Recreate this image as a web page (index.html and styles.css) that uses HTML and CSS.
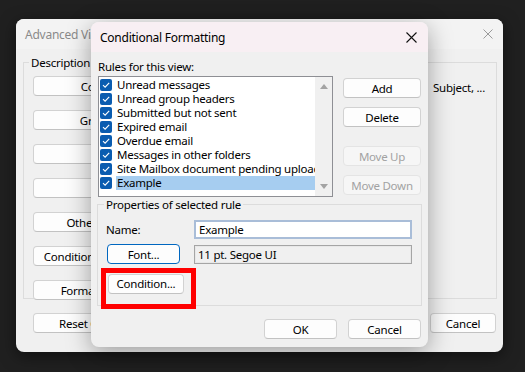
FILE: index.html
```html
<!DOCTYPE html>
<html lang="en">
<head>
  <meta charset="UTF-8" />
  <title>Conditional Formatting</title>
  <link rel="stylesheet" href="styles.css">
</head>
<body>

  <!-- Advanced View Settings (behind) -->
  <div class="window back-window">
    <div class="titlebar">
      <span class="title">Advanced View Settings: Compact</span>
      <svg class="close" width="10" height="10" viewBox="0 0 10 10"><path d="M0.5 0.5L9.5 9.5M9.5 0.5L0.5 9.5" stroke="currentColor" stroke-width="1"/></svg>
    </div>
    <div class="body">
      <fieldset class="group desc-group">
        <legend>Description</legend>
        <div class="desc-row">
          <button class="btn wide">Columns...</button>
          <div class="desc-text long"><span>Importance, Reminder, Icon, Flag Status, Attachment, From,  Subject, ...</span></div>
        </div>
        <div class="desc-row"><button class="btn wide">Group By...</button><div class="desc-text"><span>Off</span></div></div>
        <div class="desc-row"><button class="btn wide">Sort...</button><div class="desc-text"><span>Received (descending)</span></div></div>
        <div class="desc-row"><button class="btn wide">Filter...</button><div class="desc-text"><span>Off</span></div></div>
        <div class="desc-row"><button class="btn wide">Other Settings...</button><div class="desc-text"><span>Fonts and other settings</span></div></div>
        <div class="desc-row"><button class="btn wide">Conditional Formatting...</button><div class="desc-text"><span>User defined fonts</span></div></div>
        <div class="desc-row"><button class="btn wide">Format Columns...</button><div class="desc-text"><span>Display formats</span></div></div>
      </fieldset>
      <div class="back-footer">
        <button class="btn wide">Reset Current View</button>
        <div class="footer-right">
          <button class="btn small">OK</button>
          <button class="btn small">Cancel</button>
        </div>
      </div>
    </div>
  </div>

  <!-- Conditional Formatting (front) -->
  <div class="window front-window">
    <div class="titlebar">
      <span class="title">Conditional Formatting</span>
      <svg class="close" width="11" height="11" viewBox="0 0 11 11"><path d="M0.5 0.5L10.5 10.5M10.5 0.5L0.5 10.5" stroke="currentColor" stroke-width="1.1"/></svg>
    </div>
    <div class="body">
      <div class="caption">Rules for this view:</div>
      <div class="rules-row">
        <div class="listbox">
          <ul class="rules" id="rules"></ul>
          <div class="scrollbar">
            <span class="arrow up"></span>
            <span class="arrow down"></span>
          </div>
        </div>
        <div class="side-buttons">
          <button class="btn">Add</button>
          <button class="btn">Delete</button>
          <button class="btn disabled move-up">Move Up</button>
          <button class="btn disabled">Move Down</button>
        </div>
      </div>

      <fieldset class="group props">
        <legend>Properties of selected rule</legend>
        <div class="props-grid">
          <label>Name:</label>
          <div class="field name-field">Example</div>
          <button class="btn default">Font...</button>
          <div class="field font-field">11 pt. Segoe UI</div>
          <button class="btn condition-btn">Condition...</button>
        </div>
      </fieldset>

      <div class="footer">
        <button class="btn">OK</button>
        <button class="btn">Cancel</button>
      </div>
    </div>

    <!-- highlight drawn over the screenshot -->
    <div class="callout"></div>
  </div>

  <script>
    const rules = [
      'Unread messages',
      'Unread group headers',
      'Submitted but not sent',
      'Expired email',
      'Overdue email',
      'Messages in other folders',
      'Site Mailbox document pending upload',
      'Example'
    ];
    const list = document.getElementById('rules');
    const tick = '<svg width="12" height="12" viewBox="0 0 12 12"><path d="M3 6.2L5.1 8.2L9.2 3.9" fill="none" stroke="#fff" stroke-width="1.1"/></svg>';

    rules.forEach((name, i) => {
      const li = document.createElement('li');
      li.innerHTML = `<span class="check">${tick}</span><span class="rule-name${i === rules.length - 1 ? ' selected' : ''}">${name}</span>`;
      list.appendChild(li);
    });
  </script>
</body>
</html>
```

FILE: styles.css
```css
body {
  margin: 0;
  background: #202020;
  font-family: 'Noto Sans', sans-serif;
  font-size: 11.5px;
  letter-spacing: -0.25px;
  color: #000;
  width: 525px;
  height: 372px;
  overflow: hidden;
  position: relative;
}

.window {
  position: absolute;
  background: #f0f0f0;
  border-radius: 8px;
  overflow: hidden;
}

.titlebar {
  height: 30px;
  display: flex;
  align-items: center;
  justify-content: space-between;
  padding: 0 10px 0 9px;
}

.btn {
  font: inherit;
  letter-spacing: inherit;
  color: #000;
  background: #fdfdfd;
  border: 1px solid #d2d2d2;
  border-bottom-color: #c2c2c2;
  border-radius: 4px;
  height: 20px;
  padding: 0;
  line-height: 17px;
  text-align: center;
  white-space: nowrap;
  overflow: hidden;
}

.btn.disabled {
  color: #a2a2a2;
  background: #f6f6f6;
  border-color: #e4e4e4;
}

.btn.default {
  border-color: #0067c0;
}

.group {
  margin: 0;
  border: 1px solid #dcdcdc;
  border-radius: 0;
}

.group legend {
  padding: 0 2px;
}

/* back window */

.back-window {
  left: 16px;
  top: 19px;
  width: 487px;
  height: 333px;
  box-shadow: 0 4px 16px rgba(0, 0, 0, 0.5);
}

.back-window .titlebar {
  background: #f3f3f3;
  color: #8a8a8a;
  font-size: 12px;
}

.back-window .close {
  color: #9a9a9a;
}

.back-window .body {
  padding: 6px 6px 0 7px;
}

.desc-group {
  height: 236px;
  padding: 6px 9px 0 9px;
}

.desc-group legend {
  margin-left: -4px;
}

.desc-row {
  display: flex;
  align-items: center;
  height: 20px;
  margin-bottom: 14px;
}

.btn.wide {
  width: 150px;
  flex-shrink: 0;
}

.desc-text {
  width: 292px;
  display: flex;
  overflow: hidden;
  white-space: pre;
  padding: 2px 0 0 10px;
}

.desc-text.long {
  justify-content: flex-end;
}

.back-footer {
  display: flex;
  justify-content: space-between;
  margin-top: 14px;
  padding: 0 1px 0 10px;
}

.footer-right {
  display: flex;
  gap: 4px;
}

.btn.small {
  width: 66px;
}

/* front window */

.front-window {
  left: 91px;
  top: 22px;
  width: 337px;
  height: 325px;
  box-shadow: 0 6px 24px rgba(0, 0, 0, 0.35);
}

.front-window .titlebar {
  background: #f8eff3;
  font-size: 12px;
}

.front-window .close {
  color: #111;
  margin-right: 1px;
}

.front-window .body {
  padding: 6px 7px 0 7px;
}

.caption {
  height: 18px;
  line-height: 18px;
}

.rules-row {
  display: flex;
  gap: 10px;
}

.listbox {
  width: 235px;
  height: 121px;
  box-sizing: border-box;
  border: 1px solid #8e8f94;
  background: #fff;
  display: flex;
}

.rules {
  list-style: none;
  margin: 0;
  padding: 1px 0 0 1px;
  flex: 1;
  min-width: 0;
}

.rules li {
  display: flex;
  align-items: center;
  height: 14px;
  white-space: nowrap;
}

.check {
  width: 12px;
  height: 12px;
  flex-shrink: 0;
  background: #0a5cb0;
  border-radius: 2px;
  margin-right: 4px;
  display: flex;
}

.rule-name {
  flex: 1;
  overflow: hidden;
  padding-left: 1px;
  line-height: 14px;
}

.rule-name.selected {
  background: #a6cdf0;
}

.scrollbar {
  width: 17px;
  background: #f0f0f0;
  display: flex;
  flex-direction: column;
  justify-content: space-between;
  align-items: center;
  padding: 7px 0;
}

.arrow {
  width: 0;
  height: 0;
  border-left: 4px solid transparent;
  border-right: 4px solid transparent;
}

.arrow.up {
  border-bottom: 5px solid #a3a3a3;
}

.arrow.down {
  border-top: 5px solid #a3a3a3;
}

.side-buttons {
  width: 78px;
  display: flex;
  flex-direction: column;
  gap: 9px;
  padding-top: 2px;
}

.side-buttons .move-up {
  margin-top: 10px;
}

.props {
  margin: 0 0 0 -1px;
  width: 325px;
  height: 109px;
  box-sizing: border-box;
  padding: 0 9px 0 8px;
}

.props legend {
  margin-left: -2px;
}

.props-grid {
  display: grid;
  grid-template-columns: 88px 218px;
  grid-template-rows: 19px 20px 20px;
  row-gap: 5px;
  align-items: center;
  margin-top: 8px;
}

.field {
  box-sizing: border-box;
  height: 19px;
  line-height: 15px;
  padding-left: 3px;
}

.name-field {
  background: #fff;
  border: 2px solid #a9bdd8;
}

.font-field {
  background: #f0f0f0;
  border: 1px solid #a5a5a5;
  box-shadow: inset 0 0 0 1px #e8e8e8;
  line-height: 17px;
}

.props-grid .btn.default {
  width: 73px;
  margin-left: 1px;
}

.condition-btn {
  width: 76px;
  margin: 9px 0 0 2px;
}

.footer {
  display: flex;
  justify-content: flex-end;
  gap: 11px;
  margin-top: 13px;
}

.footer .btn {
  width: 73px;
}

.callout {
  position: absolute;
  left: 10px;
  top: 246px;
  width: 95px;
  height: 41px;
  box-sizing: border-box;
  border: 5px solid #ff0000;
}
```
